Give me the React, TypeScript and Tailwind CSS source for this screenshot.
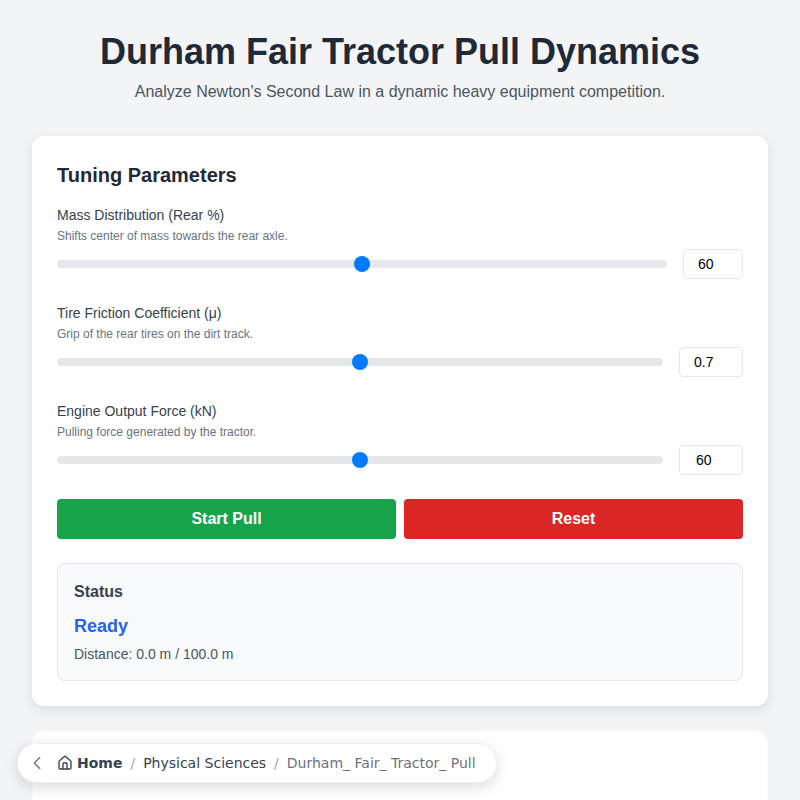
import React from 'react';
import { ChevronLeft, Home } from 'lucide-react';

const params = [
  { label: 'Mass Distribution (Rear %)', help: 'Shifts center of mass towards the rear axle.', value: '60', inputClass: 'w-[60px] pl-3.5' },
  { label: 'Tire Friction Coefficient (μ)', help: 'Grip of the rear tires on the dirt track.', value: '0.7', inputClass: 'w-16 pl-3.5' },
  { label: 'Engine Output Force (kN)', help: 'Pulling force generated by the tractor.', value: '60', inputClass: 'w-16 pl-4' },
];

const Param = ({ label, help, value, inputClass }: { label: string; help: string; value: string; inputClass: string }) => (
  <div className="mb-6">
    <div className="text-sm leading-5 text-[#374151]">{label}</div>
    <div className="mt-[3px] text-xs leading-4 text-[#6b7280]">{help}</div>
    <div className="mt-[5px] flex items-center gap-4">
      <div className="relative h-2 flex-1 rounded-full bg-[#e5e7eb]">
        <div className="absolute left-1/2 top-1/2 size-4 -translate-x-1/2 -translate-y-1/2 rounded-full bg-[#007bff]" />
      </div>
      <div className={`${inputClass} h-[30px] rounded border border-[#e5e7eb] bg-white text-sm leading-[28px] text-black`}>
        {value}
      </div>
    </div>
  </div>
);

export default function App() {
  return (
    <div className="relative h-screen overflow-hidden bg-[#f3f4f6] font-['Liberation_Sans',Arial,sans-serif]">
      <header className="pt-7 text-center">
        <h1 className="text-4xl font-bold leading-12 text-[#1f2937]">Durham Fair Tractor Pull Dynamics</h1>
        <p className="mt-1 text-base leading-6 text-[#4b5563]">Analyze Newton's Second Law in a dynamic heavy equipment competition.</p>
      </header>

      <main className="mt-8 px-8">
        <section className="rounded-xl bg-white p-[25px] shadow-[0_4px_12px_rgba(0,0,0,0.1)]">
          <h2 className="mb-4 text-xl font-bold leading-7 text-[#1f2937]">Tuning Parameters</h2>
          {params.map((p) => (
            <Param key={p.label} {...p} />
          ))}

          <div className="flex gap-2">
            <button className="h-10 flex-1 rounded bg-[#16a34a] text-base font-bold text-white">Start Pull</button>
            <button className="h-10 flex-1 rounded bg-[#dc2626] text-base font-bold text-white">Reset</button>
          </div>

          <div className="mt-6 rounded-lg border border-[#e5e7eb] bg-[#f9fafb] p-4">
            <h3 className="text-base font-bold leading-6 text-[#374151]">Status</h3>
            <div className="mt-2 text-lg font-bold leading-7 text-[#2563eb]">Ready</div>
            <div className="mt-1 text-sm leading-5 text-[#4b5563]">Distance: 0.0 m / 100.0 m</div>
          </div>
        </section>

        {/* next card, only its top edge shows */}
        <section className="mt-6 h-40 rounded-xl border-2 border-[#fbfbfc] bg-white" />
      </main>

      <nav className="absolute bottom-[17px] left-[17px] flex h-10 w-[480px] items-center rounded-full border border-[#eceef1] bg-white/95 pl-2 font-['DejaVu_Sans',sans-serif] text-sm shadow-[0_4px_14px_rgba(0,0,0,0.14)]">
        <ChevronLeft size={22} strokeWidth={1.5} className="text-[#6b7280]" />
        <Home size={16} className="ml-[9px] text-[#374151]" />
        <span className="ml-1 font-bold text-[#374151]">Home</span>
        <span className="mx-2 text-[#9ca3af]">/</span>
        <span className="text-[#374151]">Physical Sciences</span>
        <span className="mx-2 text-[#9ca3af]">/</span>
        <span className="text-[#6b7280]">Durham_ Fair_ Tractor_ Pull</span>
      </nav>
    </div>
  );
}
